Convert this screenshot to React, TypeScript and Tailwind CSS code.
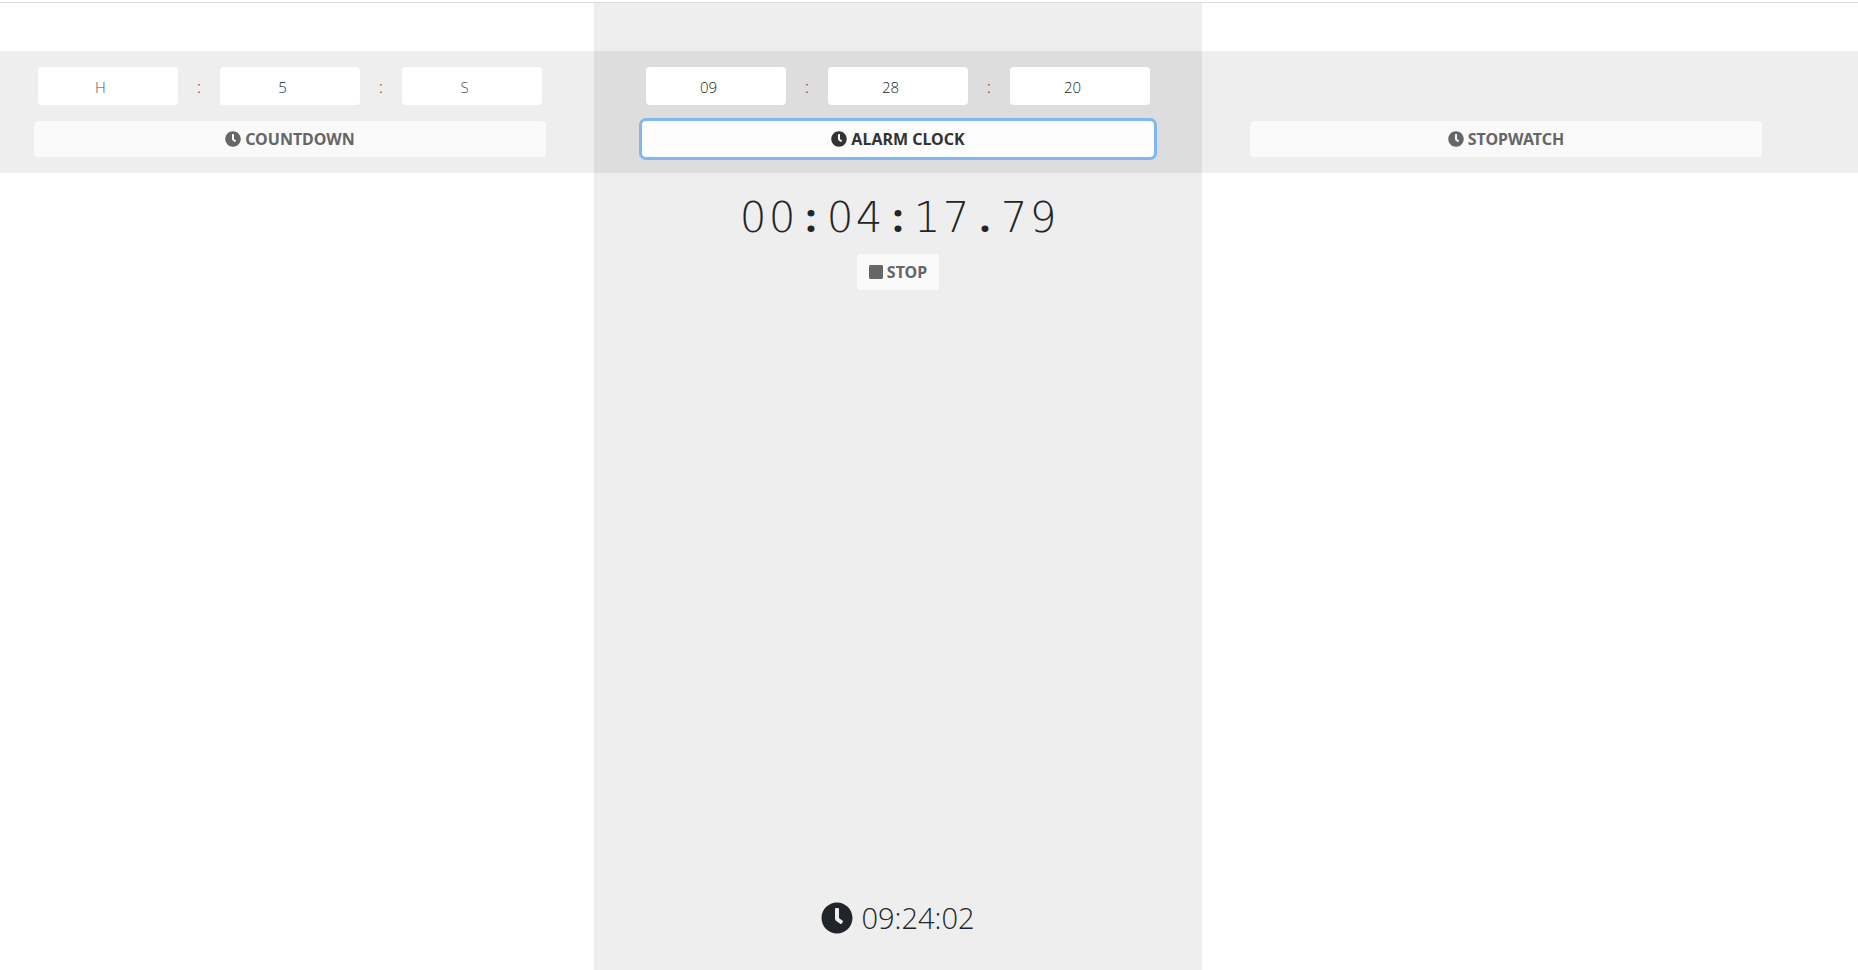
import type { ReactNode } from "react";
import { FaClock, FaSquare } from "react-icons/fa";

/** Three equal tracks; the strip runs a little past the left edge of the page. */
function Columns({ children, className = "" }: { children: ReactNode; className?: string }) {
  return (
    <div className={className}>
      <div className="-ml-[14px] mr-12 grid h-full grid-cols-3">{children}</div>
    </div>
  );
}

type Unit = { label: string; placeholder: string; value?: string };

function TimeFields({ units }: { units: Unit[] }) {
  return (
    <div className="flex items-center px-1">
      {units.map((unit, i) => (
        <div key={unit.label} className="contents">
          {i > 0 && <span className="w-[42px] shrink-0 pt-0.5 text-center">:</span>}
          <input
            type="number"
            aria-label={unit.label}
            placeholder={unit.placeholder}
            defaultValue={unit.value}
            className="h-[38px] w-0 min-w-0 flex-1 rounded bg-white px-3 pt-0.5 text-center text-[15px] text-[#212529] outline-none placeholder:text-[#495057]"
          />
        </div>
      ))}
    </div>
  );
}

function ModeButton({ children, active = false }: { children: string; active?: boolean }) {
  return (
    <button
      type="button"
      className={`flex h-9 w-full items-center justify-center gap-1 rounded font-['Noto_Sans',sans-serif] font-bold uppercase ${
        active ? "bg-[#fdfdfd] text-[#333] ring-3 ring-[#80b6f2]" : "bg-[#fafafa] text-[#666]"
      }`}
    >
      <FaClock className="size-4" aria-hidden="true" />
      {children}
    </button>
  );
}

function Readout({ time }: { time: string }) {
  return (
    <div role="timer" className="flex h-[81px] items-baseline justify-center pt-4">
      {time.split("").map((c, i) => (
        <span
          key={i}
          className={
            /\d/.test(c)
              ? "w-[29px] text-center font-['DejaVu_Sans',sans-serif] text-[42px] leading-[56px] font-extralight"
              : "w-[29px] text-center text-[40px] leading-[56px] font-bold"
          }
        >
          {c}
        </span>
      ))}
    </div>
  );
}

export default function App() {
  return (
    <div className="flex min-h-screen flex-col bg-white pt-0.5 font-['Open_Sans','Noto_Sans',sans-serif] text-base font-light text-[#212529]">
      <Columns className="h-[49px] border-t border-[#ddd]">
        <div className="col-start-2 bg-[#eee]" />
      </Columns>

      <Columns className="bg-[#eee]">
        <section className="flex flex-col gap-4 px-12 py-4">
          <TimeFields
            units={[
              { label: "Countdown hours", placeholder: "H" },
              { label: "Countdown minutes", placeholder: "M", value: "5" },
              { label: "Countdown seconds", placeholder: "S" },
            ]}
          />
          <ModeButton>Countdown</ModeButton>
        </section>
        <section className="flex flex-col gap-4 bg-[#ddd] px-12 py-4">
          <TimeFields
            units={[
              { label: "Alarm hour", placeholder: "H", value: "09" },
              { label: "Alarm minute", placeholder: "M", value: "28" },
              { label: "Alarm second", placeholder: "S", value: "20" },
            ]}
          />
          <ModeButton active>Alarm clock</ModeButton>
        </section>
        <section className="flex flex-col justify-end px-12 py-4">
          <ModeButton>Stopwatch</ModeButton>
        </section>
      </Columns>

      <Columns className="grid grow">
        <main className="col-start-2 flex flex-col items-center bg-[#eee]">
          <Readout time="00:04:17.79" />
          <button
            type="button"
            className="flex h-9 items-center gap-1 rounded bg-[#fafafa] px-3 font-['Noto_Sans',sans-serif] font-bold text-[#666] uppercase"
          >
            <FaSquare className="h-4 w-[14px]" aria-hidden="true" />
            Stop
          </button>
          <div className="mt-auto mb-7 flex h-12 items-center gap-2 text-[29px]">
            <FaClock className="size-8" aria-hidden="true" />
            <time>09:24:02</time>
          </div>
        </main>
      </Columns>
    </div>
  );
}
